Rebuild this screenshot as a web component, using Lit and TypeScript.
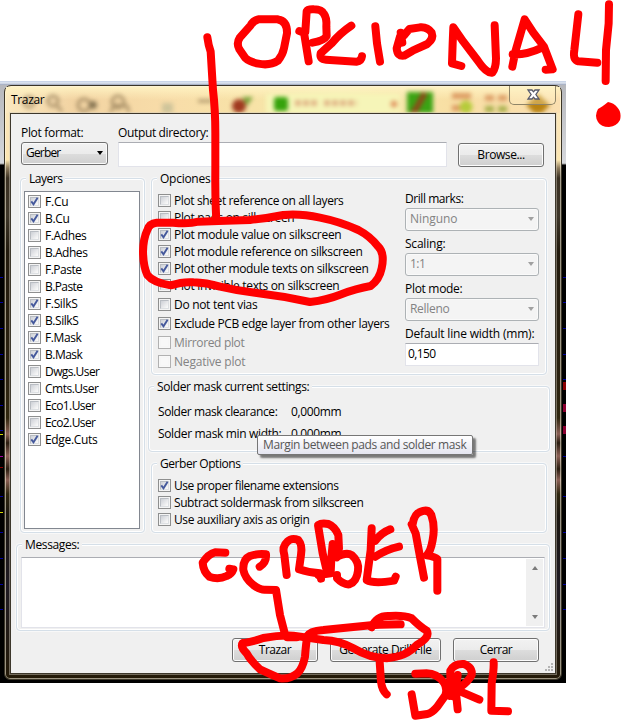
import { LitElement, html, css, svg } from "lit";
import { customElement, property } from "lit/decorators.js";
import { classMap } from "lit/directives/class-map.js";

/** A single line of text tracked to a given advance width. */
@customElement("fit-text")
class FitText extends LitElement {
  @property({ type: Number }) w = 0;
  @property() text = "";

  static styles = css`
    :host { display: inline-block; white-space: pre; }
    span { display: inline-block; }
  `;

  render() {
    return html`<span>${this.text}</span>`;
  }

  firstUpdated() {
    const span = this.renderRoot.querySelector("span") as HTMLElement;
    const natural = span.getBoundingClientRect().width;
    if (this.w && natural) {
      span.style.letterSpacing = `${(this.w + 0.4 - natural) / this.text.length}px`;
    }
  }
}

@customElement("check-row")
class CheckRow extends LitElement {
  @property({ type: Boolean }) checked = false;
  @property({ type: Boolean }) disabled = false;
  @property({ type: Number }) w = 0;
  @property() label = "";

  static styles = css`
    :host { display: flex; align-items: center; height: 17px; }
    .box {
      box-sizing: border-box; width: 13px; height: 13px; flex: none;
      border: 1px solid #8e8f8f; background: #f4f4f4; padding: 1px;
      margin-right: var(--gap, 3px);
    }
    .inner {
      box-sizing: border-box; width: 9px; height: 9px;
      border: 1px solid #b9bdc3;
      border-right-color: #dde0e3; border-bottom-color: #dde0e3;
      background: linear-gradient(135deg, #cdd0d6, #f8f8f8 90%);
    }
    svg { display: block; width: 9px; height: 9px; margin: -1px; overflow: visible; }
    .off .inner { border-color: #f6f6f6; background: #f8f8f8; }
    .off.box { border-color: #b1b1b1; background: #f8f8f8; }
    fit-text { line-height: 17px; }
    .dim { color: #838383; }
  `;

  render() {
    return html`
      <div class=${classMap({ box: true, off: this.disabled })}>
        <div class="inner">
          ${this.checked
            ? html`<svg viewBox="0 0 9 9">
                <path d="M1.3 4.4 L3.5 7.3 L7.6 0.8" fill="none" stroke="#45599c" stroke-width="1.9" />
              </svg>`
            : ""}
        </div>
      </div>
      <fit-text class=${classMap({ dim: this.disabled })} .text=${this.label} .w=${this.w}></fit-text>
    `;
  }
}

type Row = [label: string, width: number, checked?: boolean, disabled?: boolean];

const LAYERS: Row[] = [
  ["F.Cu", 23, true], ["B.Cu", 24, true], ["F.Adhes", 41], ["B.Adhes", 42],
  ["F.Paste", 36], ["B.Paste", 37], ["F.SilkS", 32, true], ["B.SilkS", 33, true],
  ["F.Mask", 36, true], ["B.Mask", 37, true], ["Dwgs.User", 54], ["Cmts.User", 53],
  ["Eco1.User", 50], ["Eco2.User", 50], ["Edge.Cuts", 52, true],
];

const OPTIONS: Row[] = [
  ["Plot sheet reference on all layers", 169], ["Plot pads on silkscreen", 120],
  ["Plot module value on silkscreen", 167, true],
  ["Plot module reference on silkscreen", 188, true],
  ["Plot other module texts on silkscreen", 194, true],
  ["Plot invisible texts on silkscreen", 165],
];

const OPTIONS_WIDE: Row[] = [
  ["Do not tent vias", 83], ["Exclude PCB edge layer from other layers", 215, true],
  ["Mirrored plot", 70, false, true], ["Negative plot", 71, false, true],
];

const GERBER: Row[] = [
  ["Use proper filename extensions", 164, true],
  ["Subtract soldermask from silkscreen", 189], ["Use auxiliary axis as origin", 135],
];

const COMBOS: [string, number, string, number][] = [
  ["Drill marks:", 58, "Ninguno", 47],
  ["Scaling:", 40, "1:1", 15],
  ["Plot mode:", 57, "Relleno", 39],
];

const checks = (rows: Row[]) =>
  rows.map(([label, w, on, off]) => html`
    <check-row .label=${label} .w=${w} .checked=${!!on} .disabled=${!!off}></check-row>`);

const txt = (text: string, w: number, cls = "") =>
  html`<fit-text class=${cls} .text=${text} .w=${w}></fit-text>`;

/* Freehand strokes: each group is drawn at three times page scale. */
const STROKES: { at: string; paths: string[] }[] = [
  {
    at: "translate(190 0)",
    paths: [
      "M262 58 L205 58 Q190 62 182 76 L150 112 Q138 130 148 148 L166 174 Q178 186 205 191 Q240 198 264 182 Q278 165 282 145 L291 100 Q292 62 262 58",
      "M328 93 L342 98 L356 184 M346 95 L350 34 Q353 27 372 28 Q395 28 402 42 Q411 54 409 80 L410 108 Q402 122 368 128",
      "M484 77 Q450 100 425 130 L392 160 Q388 178 408 179 L500 185 Q514 184 516 169",
      "M556 79 L561 130 L570 185",
      "M632 98 L637 128 M630 110 L620 145 Q622 170 642 167 L668 152 L712 132 Q732 116 725 98 Q712 80 690 82 L658 87 L642 106",
      "M814 198 L786 190 L788 130 L790 82 L820 125 L862 180 Q890 222 907 218 Q918 205 918 175 L914 76",
      "M967 200 L976 155 L1004 58 L1030 98 L1062 140 L1088 208 L1067 209 M968 163 Q1010 165 1058 142",
      "M1165 43 L1153 150 Q1148 180 1165 184 L1222 188",
      "M1257 13 L1256 70 L1248 150 L1247 243",
      "M52 112 Q55 135 62 155 L69 270 Q76 330 76 400 L76 500 Q75 590 79 662",
    ],
  },
  {
    at: "translate(140 170)",
    paths: [
      "M235 153 L175 155 Q145 163 100 158 L50 158 Q28 160 22 180 Q10 205 9 245 Q10 290 22 315 Q40 338 92 346 Q130 334 160 337 Q200 338 240 350 Q290 362 345 368 Q430 378 510 396 Q560 390 600 374 Q650 355 692 348 Q718 330 725 295 Q735 250 715 230 Q690 198 655 180 Q600 155 540 143 Q480 130 430 135 Q380 145 330 150 Z",
    ],
  },
  {
    at: "translate(190 500)",
    paths: [
      "M106 158 L75 157 Q55 162 38 188 Q40 215 58 230 Q85 240 110 228 Q125 222 130 208 L118 206",
      "M209 200 Q230 188 228 163 Q205 160 180 168 Q158 178 160 210 Q165 235 190 255 Q210 270 225 269 L258 270 L270 345 L283 395",
      "M290 225 L283 165 Q275 140 292 125 Q305 112 325 120 Q338 135 333 165 L327 208 Q355 218 390 220 L393 236",
      "M412 220 L398 160 L384 75 Q395 68 415 72 Q435 80 445 105 L447 145 L440 172 M428 132 L424 175 L422 220 L385 225",
      "M432 145 L440 170 Q470 155 485 165 Q508 185 504 212 Q500 245 478 253 Q460 255 441 235 L441 225",
      "M545 85 L542 150 L530 240 Q550 252 612 242 L617 230 M601 88 Q575 98 556 122 M627 140 Q590 148 556 170",
      "M665 73 Q670 85 677 100 L690 170 L702 233 M668 72 Q673 42 690 36 Q715 25 724 45 Q736 80 728 120 Q722 155 710 166 Q735 170 742 177 L742 272",
      "M158 430 Q190 425 220 414 Q270 405 310 407 L400 420 Q450 422 490 445 Q540 475 590 475 Q650 470 680 435 Q722 412 710 392 Q690 380 665 355 Q640 345 600 348 Q560 345 545 382",
      "M632 373 Q560 374 520 378 L400 390 Q360 393 352 408 Q348 430 345 470 Q338 505 322 520 Q300 538 270 535 Q240 522 210 508 Q180 480 170 460 Q150 440 158 430 M292 412 L320 412",
      "M569 485 L573 545 Q576 570 590 583",
    ],
  },
  {
    at: "translate(290 500)",
    paths: [
      "M376 521 L410 520 Q440 520 462 548 Q473 566 466 586 L442 620 Q425 640 412 642 L376 647 L365 583",
      "M479 588 L481 535 L481 512 Q492 490 522 492 Q548 502 545 525 Q535 545 510 562 L510 574 L568 599",
      "M503 525 L497 570 L503 628 M490 540 L492 590",
      "M611 487 Q612 510 605 550 L604 632 L654 634",
    ],
  },
];

@customElement("app-root")
class AppRoot extends LitElement {
  static styles = css`
    :host {
      display: block; position: relative; box-sizing: border-box;
      width: 621px; height: 720px; padding-top: 81px; overflow: hidden;
      background: #fff; color: #000;
      font: 12px/16px "Open Sans", "Noto Sans", sans-serif;
    }
    * { box-sizing: border-box; }
    .backdrop {
      width: 566px; height: 602px; padding: 4px 4px 3px;
      background:
        linear-gradient(#c3cfe4, #dfe6f1 2px, #99a3b8 4px) top / 100% 4px no-repeat,
        linear-gradient(#b6b8bd, #d6d8dc 78px, #9a9a9a 79px, #000 80px) 0 4px no-repeat,
        #000;
    }
    .window {
      width: 558px; height: 595px; border: 1px solid #3b3527; border-radius: 7px 7px 6px 6px;
      padding: 0 5px;
      background: linear-gradient(#fbe9ba 0, #fae3b5 60px, #fbe6b0 74px, #8e7b5c 82px, #3a3022 92px,
        #3e3629 130px, #221a0d 165px, #2b2210 290px, #30270f 332px, #8b6055 348px, #2a1d10 357px,
        #8b6055 370px, #2a1d10 383px, #8b6055 394px, #30270f 408px, #1b1610 430px, #1f1a22 500px, #241a08);
      box-shadow: inset 0 0 0 1px rgba(255, 250, 230, 0.55);
    }
    .title { position: relative; height: 27px; margin: 0 -4px; padding: 6px 0 0 5px; }
    .title .glass { position: absolute; left: 0; top: 1px; width: 554px; height: 26px; }
    .title fit-text { position: relative; }
    .blurred { filter: blur(2px); }
    .blur-layer { filter: blur(2px); }
    .close {
      position: absolute; right: 4px; top: 0; width: 47px; height: 19px;
      border: 1px solid #8f8467; border-top: 0; border-radius: 0 0 5px 5px;
      background: rgba(255, 244, 205, 0.3);
    }
    .close svg { display: block; margin: 3px auto 0 17px; width: 13px; height: 11px; overflow: visible; }
    .client {
      position: relative; width: 546px; height: 561px; border: 1px solid #3d372b; background: #f0f0f0;
      box-shadow: 0 0 0 1px rgba(210, 205, 190, 0.45);
    }
    .top { display: flex; height: 64px; padding: 11px 0 0 10px; }
    .col { display: flex; flex-direction: column; gap: 1px; }
    .fmt { width: 97px; }
    .dir { width: 329px; }
    .combo {
      display: flex; align-items: center; justify-content: space-between;
      height: 23px; width: 87px; padding: 0 4px 1px; border: 1px solid #707070; border-radius: 3px;
      background: linear-gradient(#f2f2f2, #ebebeb 50%, #dddddd 50%, #cfcfcf);
      box-shadow: inset 0 0 0 1px #fafafa;
    }
    .arrow { width: 0; height: 0; border: 3.5px solid transparent; border-top: 4px solid #000; border-bottom: 0; }
    .combo.off { width: 134px; background: #f4f4f4; border-color: #adb2b5; color: #838383; }
    .combo.off .arrow { border-top-color: #a0a0a0; }
    .field { border: 1px solid #e2e3ea; border-top-color: #abadb3; background: #fff; padding: 2px; }
    .dir .field { height: 25px; }
    .btn {
      display: flex; align-items: center; justify-content: center; height: 24px; width: 86px;
      border: 1px solid #707070; border-radius: 3px; padding-bottom: 1px;
      background: linear-gradient(#f2f2f2, #ebebeb 50%, #dddddd 50%, #cfcfcf);
      box-shadow: inset 0 0 0 1px #fcfcfc;
    }
    .browse { margin: 18px 0 0 11px; }
    .group {
      position: relative; border: 1px solid #d5dfe8; border-radius: 4px;
      box-shadow: inset 0 0 0 1px #fff, 0 0 0 1px #f8f8f8;
    }
    .legend {
      position: absolute; left: 5px; top: -8px; padding: 0 3px; background: #f0f0f0; line-height: 16px;
    }
    .middle { display: flex; padding-left: 9px; }
    .layers { width: 125px; height: 355px; padding: 12px 0 0 3px; }
    .list { width: 116px; height: 338px; border: 1px solid #828790; background: #fff; padding: 1px 0 0 3px; --gap: 4px; }
    .stack { display: flex; flex-direction: column; gap: 11px; margin-left: 3px; width: 402px; }
    .options { margin-left: 3px; width: 396px; height: 197px; padding: 13px 0 0 6px; display: flex; }
    .left { width: 247px; }
    .wide { padding-top: 1px; }
    .wide check-row { height: 19px; }
    .right { margin-top: -1px; width: 134px; }
    .pair { display: flex; flex-direction: column; gap: 1px; margin-bottom: 5px; }
    .pair .field { height: 23px; }
    .solder { height: 66px; padding: 17px 0 0 9px; }
    .solder .line { display: flex; height: 22px; }
    .solder .key { width: 133px; }
    .gerber { margin-left: 3px; width: 396px; height: 70px; padding: 13px 0 0 6px; }
    .messages { width: 534px; height: 87px; margin: 11px 0 0 5px; padding: 12px 0 0 4px; }
    .log { display: flex; justify-content: flex-end; width: 524px; height: 71px; padding: 1px; }
    .scroll {
      width: 17px; background: #f0f0f0; display: flex; flex-direction: column;
      justify-content: space-between; align-items: center; padding: 7px 0 7px;
    }
    .down { width: 0; height: 0; border: 3.5px solid transparent; border-top: 4px solid #7b7b7b; border-bottom: 0; }
    .up { width: 0; height: 0; border: 3.5px solid transparent; border-bottom: 4px solid #7b7b7b; border-top: 0; }
    .buttons { display: flex; justify-content: flex-end; gap: 12px; margin: 7px 16px 0 0; }
    .btn.drill { width: 111px; }
    .grip { position: absolute; right: 2px; bottom: 1px; width: 9px; height: 9px; }
    .tip {
      position: absolute; left: 246px; top: 321px; width: 216px; height: 20px; padding: 1px 0 0 5px;
      border: 1px solid #767676; border-radius: 2px; color: #575757;
      background: linear-gradient(#fff, #e4e5f0); box-shadow: 3px 3px 2px rgba(0, 0, 0, 0.5);
    }
    .ink { position: absolute; left: 0; top: 0; width: 621px; height: 720px; }
    .ink path { fill: none; stroke: #f00; stroke-width: 24; stroke-linecap: round; stroke-linejoin: round; }
    .ink .solid { fill: #f00; stroke: none; }
  `;

  private glass() {
    return html`<svg class="glass" viewBox="6 87 554 26">
      <defs>
        <linearGradient id="g" x1="0" x2="1">
          <stop offset="0" stop-color="#fae8c0" /><stop offset=".12" stop-color="#f2d3a2" />
          <stop offset=".3" stop-color="#f8dda9" /><stop offset=".45" stop-color="#f7e3a7" />
          <stop offset=".6" stop-color="#f6efb0" /><stop offset=".8" stop-color="#f8dfa4" />
          <stop offset="1" stop-color="#fbdfb0" />
        </linearGradient>
        <linearGradient id="v" x1="0" y1="0" x2="0" y2="1">
          <stop offset="0" stop-color="#fff4c4" stop-opacity=".9" />
          <stop offset=".5" stop-color="#fff0c0" stop-opacity="0" />
        </linearGradient>
      </defs>
      <rect x="6" y="87" width="554" height="26" fill="url(#g)" />
      <rect x="6" y="87" width="554" height="26" fill="url(#v)" />
    </svg>
    <svg class="glass blur-layer" viewBox="6 87 554 26">
      <g fill="none" stroke="#9a835c" stroke-width="3" opacity=".8">
        <circle cx="29" cy="102" r="5" /><circle cx="53" cy="101" r="5" /><path d="M57 106 l5 5" />
        <circle cx="84" cy="105" r="6" /><circle cx="118" cy="102" r="6" />
        <path d="M110 112 L115 105 L127 106 L129 112" /><path d="M198 101 L213 101" />
      </g>
      <circle cx="93" cy="105" r="4" fill="#887654" />
      <rect x="162" y="103" width="11" height="12" fill="#cfc49a" />
      <circle cx="239" cy="106" r="7" fill="#a03a20" /><path d="M242 97 h11 l-6 9 z" fill="#78a43a" />
      <rect x="266" y="94" width="134" height="19" fill="#f6f5b8" />
      <rect x="274" y="97" width="14" height="14" rx="3" fill="#36a30c" />
      <path d="M295 103 H318 M324 103 H357" stroke="#dca67c" stroke-width="6" stroke-dasharray="6 2" opacity=".8" />
      <circle cx="394" cy="104" r="3.5" fill="#e39a66" />
      <rect x="407" y="92" width="26" height="23" fill="#3ba314" />
      <path d="M425 93 L413 114" stroke="#8b4b1a" stroke-width="6" />
      <path d="M452 96 h19 M452 108 h10" stroke="#dd9c63" stroke-width="6" />
      <circle cx="466" cy="107" r="6.5" fill="#b6cb3b" />
      <path d="M485 98 h22" stroke="#dd9f68" stroke-width="6" stroke-dasharray="9 4" />
      <path d="M485 109 h22" stroke="#a8b04e" stroke-width="6" stroke-dasharray="9 4" />
      <path d="M526 105 L538 94 L550 105 L538 117 Z" fill="#b98312" />
    </svg>`;
  }

  private ink() {
    const traces = [277, 302, 328, 354, 379, 405, 430, 456, 496, 532, 558, 584, 609];
    return html`<svg class="ink" viewBox="0 0 621 720">
      ${traces.map((y) => svg`<rect x="0" y=${y} width="3" height="1" fill="#0000a0" />
        <rect x="563" y=${y} width="3" height="1" fill="#0000a0" />`)}
      <rect x="563" y="382" width="3" height="8" fill="#8b0000" />
      <rect x="563" y="404" width="3" height="8" fill="#8b0030" />
      <rect x="563" y="426" width="3" height="8" fill="#8b0030" />
      <rect x="0" y="434" width="3" height="1" fill="#d8d800" />
      <rect x="0" y="456" width="3" height="1" fill="#a000a0" />
      <rect x="0" y="467" width="3" height="1" fill="#8b0000" />
      <rect x="0" y="512" width="3" height="1" fill="#d8d800" />
      ${STROKES.map((s) => svg`<g transform="${s.at} scale(.33333)">
        ${s.paths.map((d) => svg`<path d=${d} />`)}
      </g>`)}
      <path class="solid" d="M608 102 Q614 103 617 107 Q622 112 620 120 Q617 126 609 127 Q601 127 598 122 Q594 116 598 109 Q602 107 608 102 Z" />
    </svg>`;
  }

  render() {
    return html`
      <div class="backdrop">
        <div class="window">
          <div class="title">
            ${this.glass()}
            ${txt("Trazar", 33)}
            <div class="close">
              <svg viewBox="0 0 13 11">
                <path d="M1 1 H5 L6.5 2.8 L8 1 H12 L8.9 5.5 L12 10 H8 L6.5 8.2 L5 10 H1 L4.1 5.5 Z"
                  fill="#fff" stroke="#55586a" stroke-width="1.3" />
              </svg>
            </div>
          </div>
          <div class="client">
            <div class="top">
              <div class="col fmt">
                ${txt("Plot format:", 62)}
                <div class="combo">${txt("Gerber", 34)}<span class="arrow"></span></div>
              </div>
              <div class="col dir">
                ${txt("Output directory:", 90)}
                <div class="field"></div>
              </div>
              <div class="btn browse">${txt("Browse...", 47)}</div>
            </div>

            <div class="middle">
              <div class="group layers">
                <div class="legend">${txt("Layers", 33)}</div>
                <div class="list">${checks(LAYERS)}</div>
              </div>
              <div class="stack">
                <div class="group options">
                  <div class="legend">${txt("Opciones", 50)}</div>
                  <div class="left">
                    ${checks(OPTIONS)}
                    <div class="wide">${checks(OPTIONS_WIDE)}</div>
                  </div>
                  <div class="right">
                    ${COMBOS.map(([label, lw, value, vw]) => html`
                      <div class="pair">
                        ${txt(label, lw)}
                        <div class="combo off">${txt(value, vw)}<span class="arrow"></span></div>
                      </div>`)}
                    <div class="pair">
                      ${txt("Default line width (mm):", 129)}
                      <div class="field">${txt("0,150", 27)}</div>
                    </div>
                  </div>
                </div>
                <div class="group solder">
                  <div class="legend">${txt("Solder mask current settings:", 152)}</div>
                  <div class="line"><div class="key">${txt("Solder mask clearance:", 119)}</div>${txt("0,000mm", 50)}</div>
                  <div class="line"><div class="key">${txt("Solder mask min width:", 123)}</div>${txt("0,000mm", 50)}</div>
                </div>
                <div class="group gerber">
                  <div class="legend">${txt("Gerber Options", 80)}</div>
                  ${checks(GERBER)}
                </div>
              </div>
            </div>

            <div class="group messages">
              <div class="legend">${txt("Messages:", 54)}</div>
              <div class="field log">
                <div class="scroll"><span class="up"></span><span class="down"></span></div>
              </div>
            </div>

            <div class="buttons">
              <div class="btn">${txt("Trazar", 32)}</div>
              <div class="btn drill">${txt("Generate Drill File", 92)}</div>
              <div class="btn">${txt("Cerrar", 32)}</div>
            </div>

            <svg class="grip" viewBox="0 0 9 9">
              <path d="M7 1h2M4 4h2M7 4h2M1 7h2M4 7h2M7 7h2" stroke="#b4b4b4" stroke-width="2" />
            </svg>
            <div class="tip">${txt("Margin between pads and solder mask", 203)}</div>
          </div>
        </div>
      </div>
      ${this.ink()}
    `;
  }
}
